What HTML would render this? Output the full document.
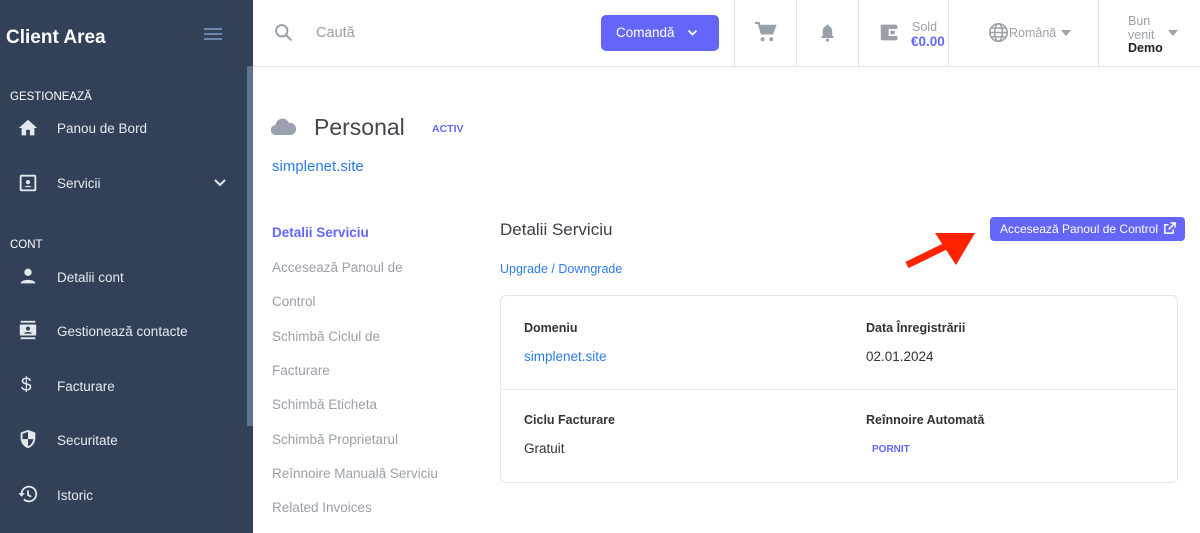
<!DOCTYPE html>
<html><head><meta charset="utf-8"><style>
*{box-sizing:border-box;margin:0;padding:0}
body{width:1200px;height:533px;overflow:hidden;font-family:"Liberation Sans",sans-serif;background:#fff;position:relative;color:#3b3f46}
.abs{position:absolute}
#side{left:0;top:0;width:253px;height:533px;background:#324157;color:#e3e7ee}
.sec{position:absolute;left:10px;font-size:11.5px;color:#fff}
.it{position:absolute;left:57px;font-size:13.5px;color:#e6e9ef}
.ic{position:absolute;left:17px;width:22px;height:22px}
#top{left:253px;top:0;width:947px;height:67px;border-bottom:1px solid #dfe4ec;background:#fff}
.vl{position:absolute;top:0;width:1px;height:66px;background:#dfe4ec}
.menu{position:absolute;left:272px;font-size:13.5px;color:#9aa0a8}
</style></head><body>
<div id="side" class="abs">
 <div class="abs" style="left:6px;top:27px;font-size:19px;font-weight:bold;color:#fff">Client Area</div>
 <div class="abs" style="left:204px;top:28px;width:18px;height:2px;background:#6b86ad;box-shadow:0 5px 0 #6b86ad,0 10px 0 #6b86ad"></div>
 <div class="abs" style="left:247px;top:66px;width:6px;height:360px;background:#5f7391"></div>
 <div class="sec" style="top:91px">GESTIONEAZĂ</div>
 <svg class="ic" style="top:117px" viewBox="0 0 24 24"><path fill="#e3e7ee" d="M10 20v-6h4v6h5v-8h3L12 3 2 12h3v8z"/></svg>
 <div class="it" style="top:121px">Panou de Bord</div>
 <svg class="ic" style="top:172px" viewBox="0 0 24 24"><rect x="4" y="4" width="16" height="16" rx="1" fill="none" stroke="#e3e7ee" stroke-width="2"/><circle cx="12" cy="11" r="2.3" fill="#e3e7ee"/><path d="M8 16.5c1-2 7-2 8 0z" fill="#e3e7ee"/></svg>
 <div class="it" style="top:176px">Servicii</div>
 <svg class="abs" style="left:213px;top:178px" width="14" height="10" viewBox="0 0 14 10"><path d="M2 2l5 5 5-5" fill="none" stroke="#e3e7ee" stroke-width="2"/></svg>
 <div class="sec" style="top:239px">CONT</div>
 <svg class="ic" style="top:265px" viewBox="0 0 24 24"><circle cx="12" cy="8" r="4" fill="#e3e7ee"/><path d="M4 20c0-5 16-5 16 0z" fill="#e3e7ee"/></svg>
 <div class="it" style="top:270px">Detalii cont</div>
 <svg class="ic" style="top:319px" viewBox="0 0 24 24"><rect x="4" y="2" width="16" height="2" fill="#e3e7ee"/><rect x="4" y="20" width="16" height="2" fill="#e3e7ee"/><rect x="3" y="6" width="18" height="12" rx="1" fill="#e3e7ee"/><circle cx="12" cy="10.5" r="2.2" fill="#324157"/><path d="M7.5 16c1-2.5 8-2.5 9 0z" fill="#324157"/></svg>
 <div class="it" style="top:324px">Gestionează contacte</div>
 <div class="abs" style="left:21px;top:375px;font-size:19px;color:#e3e7ee">$</div>
 <div class="it" style="top:379px">Facturare</div>
 <svg class="ic" style="top:428px" viewBox="0 0 24 24"><path d="M12 2L4 5v6c0 5 3.5 9.5 8 11 4.5-1.5 8-6 8-11V5z" fill="#e3e7ee"/><path d="M12 4.2v8H6V6.3zM12 12.2h5.8c-.6 3.8-3 6.7-5.8 7.7z" fill="#324157"/></svg>
 <div class="it" style="top:433px">Securitate</div>
 <svg class="ic" style="top:483px" viewBox="0 0 24 24"><path d="M5 12a8 8 0 1 1 2.5 5.8" fill="none" stroke="#e3e7ee" stroke-width="2"/><path d="M1.5 11h7l-3.5 4z" fill="#e3e7ee"/><path d="M12 8v5l3.5 2" fill="none" stroke="#e3e7ee" stroke-width="2"/></svg>
 <div class="it" style="top:488px">Istoric</div>
</div>
<div id="top" class="abs">
 <svg class="abs" style="left:20px;top:22px" width="21" height="21" viewBox="0 0 24 24"><circle cx="10" cy="10" r="6.5" fill="none" stroke="#9aa0a8" stroke-width="2.2"/><path d="M15 15l6 6" stroke="#9aa0a8" stroke-width="2.5"/></svg>
 <div class="abs" style="left:63px;top:25px;font-size:14.5px;color:#9aa0a8">Caută</div>
 <div class="abs" style="left:348px;top:15px;width:118px;height:36px;background:#6366f8;border-radius:5px;color:#fff;font-size:13.5px;padding:10px 0 0 15px">Comandă<svg style="position:absolute;left:86px;top:14px" width="11" height="8" viewBox="0 0 11 8"><path d="M1.5 1.5l4 4 4-4" fill="none" stroke="#fff" stroke-width="1.8"/></svg></div>
 <div class="vl" style="left:481px"></div><div class="vl" style="left:543px"></div><div class="vl" style="left:605px"></div><div class="vl" style="left:695px"></div><div class="vl" style="left:845px"></div>
 <svg class="abs" style="left:501px;top:21px" width="23" height="23" viewBox="0 0 24 24"><path d="M1 2h4l3 11h11l3-8H7" fill="none" stroke="#9aa0a8" stroke-width="2.2"/><path d="M7 6h14l-2 7H8z" fill="#9aa0a8"/><circle cx="9" cy="19" r="2" fill="#9aa0a8"/><circle cx="18" cy="19" r="2" fill="#9aa0a8"/></svg>
 <svg class="abs" style="left:565px;top:22px" width="19" height="21" viewBox="0 0 24 24"><path d="M12 2a2 2 0 0 1 2 2c3 1 4 4 4 7v5l2 2v1H4v-1l2-2v-5c0-3 1-6 4-7a2 2 0 0 1 2-2z" fill="#9aa0a8"/><circle cx="12" cy="21.5" r="2" fill="#9aa0a8"/></svg>
 <svg class="abs" style="left:626px;top:22px" width="21" height="21" viewBox="0 0 24 24"><rect x="2" y="3" width="19" height="18" rx="2" fill="#9aa0a8"/><rect x="11" y="8" width="11" height="8" fill="#fff"/><rect x="13" y="10" width="5" height="4" fill="#9aa0a8"/></svg>
 <div class="abs" style="left:659px;top:20px;font-size:12.5px;color:#9aa0a8">Sold</div>
 <div class="abs" style="left:658px;top:34px;font-size:13.5px;font-weight:bold;color:#6366f8">€0.00</div>
 <svg class="abs" style="left:735px;top:22px" width="21" height="21" viewBox="0 0 24 24" fill="none" stroke="#9aa0a8" stroke-width="1.8"><circle cx="12" cy="12" r="10"/><ellipse cx="12" cy="12" rx="4.5" ry="10"/><path d="M2 12h20M4 7h16M4 17h16"/></svg>
 <div class="abs" style="left:756px;top:26px;font-size:12.5px;color:#9aa0a8">Română</div>
 <svg class="abs" style="left:808px;top:30px" width="10" height="6"><path d="M0 0h10L5 6z" fill="#9aa0a8"/></svg>
 <div class="abs" style="left:875px;top:14px;font-size:12.5px;color:#9aa0a8;line-height:14px">Bun<br>venit</div>
 <div class="abs" style="left:875px;top:41px;font-size:12.5px;font-weight:bold;color:#222">Demo</div>
 <svg class="abs" style="left:915px;top:30px" width="10" height="6"><path d="M0 0h10L5 6z" fill="#9aa0a8"/></svg>
</div>
<svg class="abs" style="left:271px;top:118px" width="25" height="17" viewBox="0 0 25 17"><path d="M5 17a5 5 0 0 1-.5-10A7 7 0 0 1 18 5a5.5 5.5 0 0 1 2 12z" fill="#9aa0b0"/></svg>
<div class="abs" style="left:314px;top:114px;font-size:23px;color:#43474d">Personal</div>
<div class="abs" style="left:432px;top:123px;font-size:10.5px;font-weight:bold;color:#6366f8">ACTIV</div>
<div class="abs" style="left:272px;top:158px;font-size:15px;color:#2c7be5">simplenet.site</div>
<div class="menu" style="top:225px;color:#6366f8;font-weight:bold">Detalii Serviciu</div>
<div class="menu" style="top:260px">Accesează Panoul de</div>
<div class="menu" style="top:294px">Control</div>
<div class="menu" style="top:329px">Schimbă Ciclul de</div>
<div class="menu" style="top:363px">Facturare</div>
<div class="menu" style="top:397px">Schimbă Eticheta</div>
<div class="menu" style="top:432px">Schimbă Proprietarul</div>
<div class="menu" style="top:466px">Reînnoire Manuală Serviciu</div>
<div class="menu" style="top:500px">Related Invoices</div>
<div class="abs" style="left:500px;top:220px;font-size:17px;color:#3b3f46">Detalii Serviciu</div>
<div class="abs" style="left:500px;top:262px;font-size:12.5px;color:#2c7be5">Upgrade / Downgrade</div>
<div class="abs" style="left:990px;top:217px;width:195px;height:24px;background:#6366f8;border-radius:4px;color:#fff;font-size:12px;padding:5px 0 0 10px">Accesează Panoul de Control<svg style="position:absolute;left:173px;top:5px" width="13" height="13" viewBox="0 0 14 14" fill="none" stroke="#fff" stroke-width="1.6"><path d="M11 8v4H2V3h4M8 1h5v5M13 1L6 8"/></svg></div>
<svg class="abs" style="left:900px;top:225px" width="80" height="45" viewBox="0 0 80 45"><path d="M7 40L48 20" stroke="#ff2200" stroke-width="7"/><path d="M75 8L35 8 56 40z" fill="#ff2200"/></svg>
<div class="abs" style="left:500px;top:295px;width:678px;height:188px;border:1px solid #e3e6ea;border-radius:6px">
 <div class="abs" style="left:0;top:93px;width:676px;height:1px;background:#e6e8eb"></div>
 <div class="abs" style="left:23px;top:25px;font-size:12.5px;font-weight:bold;color:#333">Domeniu</div>
 <div class="abs" style="left:23px;top:53px;font-size:13.5px;color:#2c7be5">simplenet.site</div>
 <div class="abs" style="left:365px;top:25px;font-size:12.5px;font-weight:bold;color:#333">Data Înregistrării</div>
 <div class="abs" style="left:365px;top:53px;font-size:13.5px;color:#333">02.01.2024</div>
 <div class="abs" style="left:23px;top:117px;font-size:12.5px;font-weight:bold;color:#333">Ciclu Facturare</div>
 <div class="abs" style="left:23px;top:145px;font-size:13.5px;color:#333">Gratuit</div>
 <div class="abs" style="left:365px;top:117px;font-size:12.5px;font-weight:bold;color:#333">Reînnoire Automată</div>
 <div class="abs" style="left:371px;top:148px;font-size:10px;font-weight:bold;color:#6366f8">PORNIT</div>
</div>
</body></html>
